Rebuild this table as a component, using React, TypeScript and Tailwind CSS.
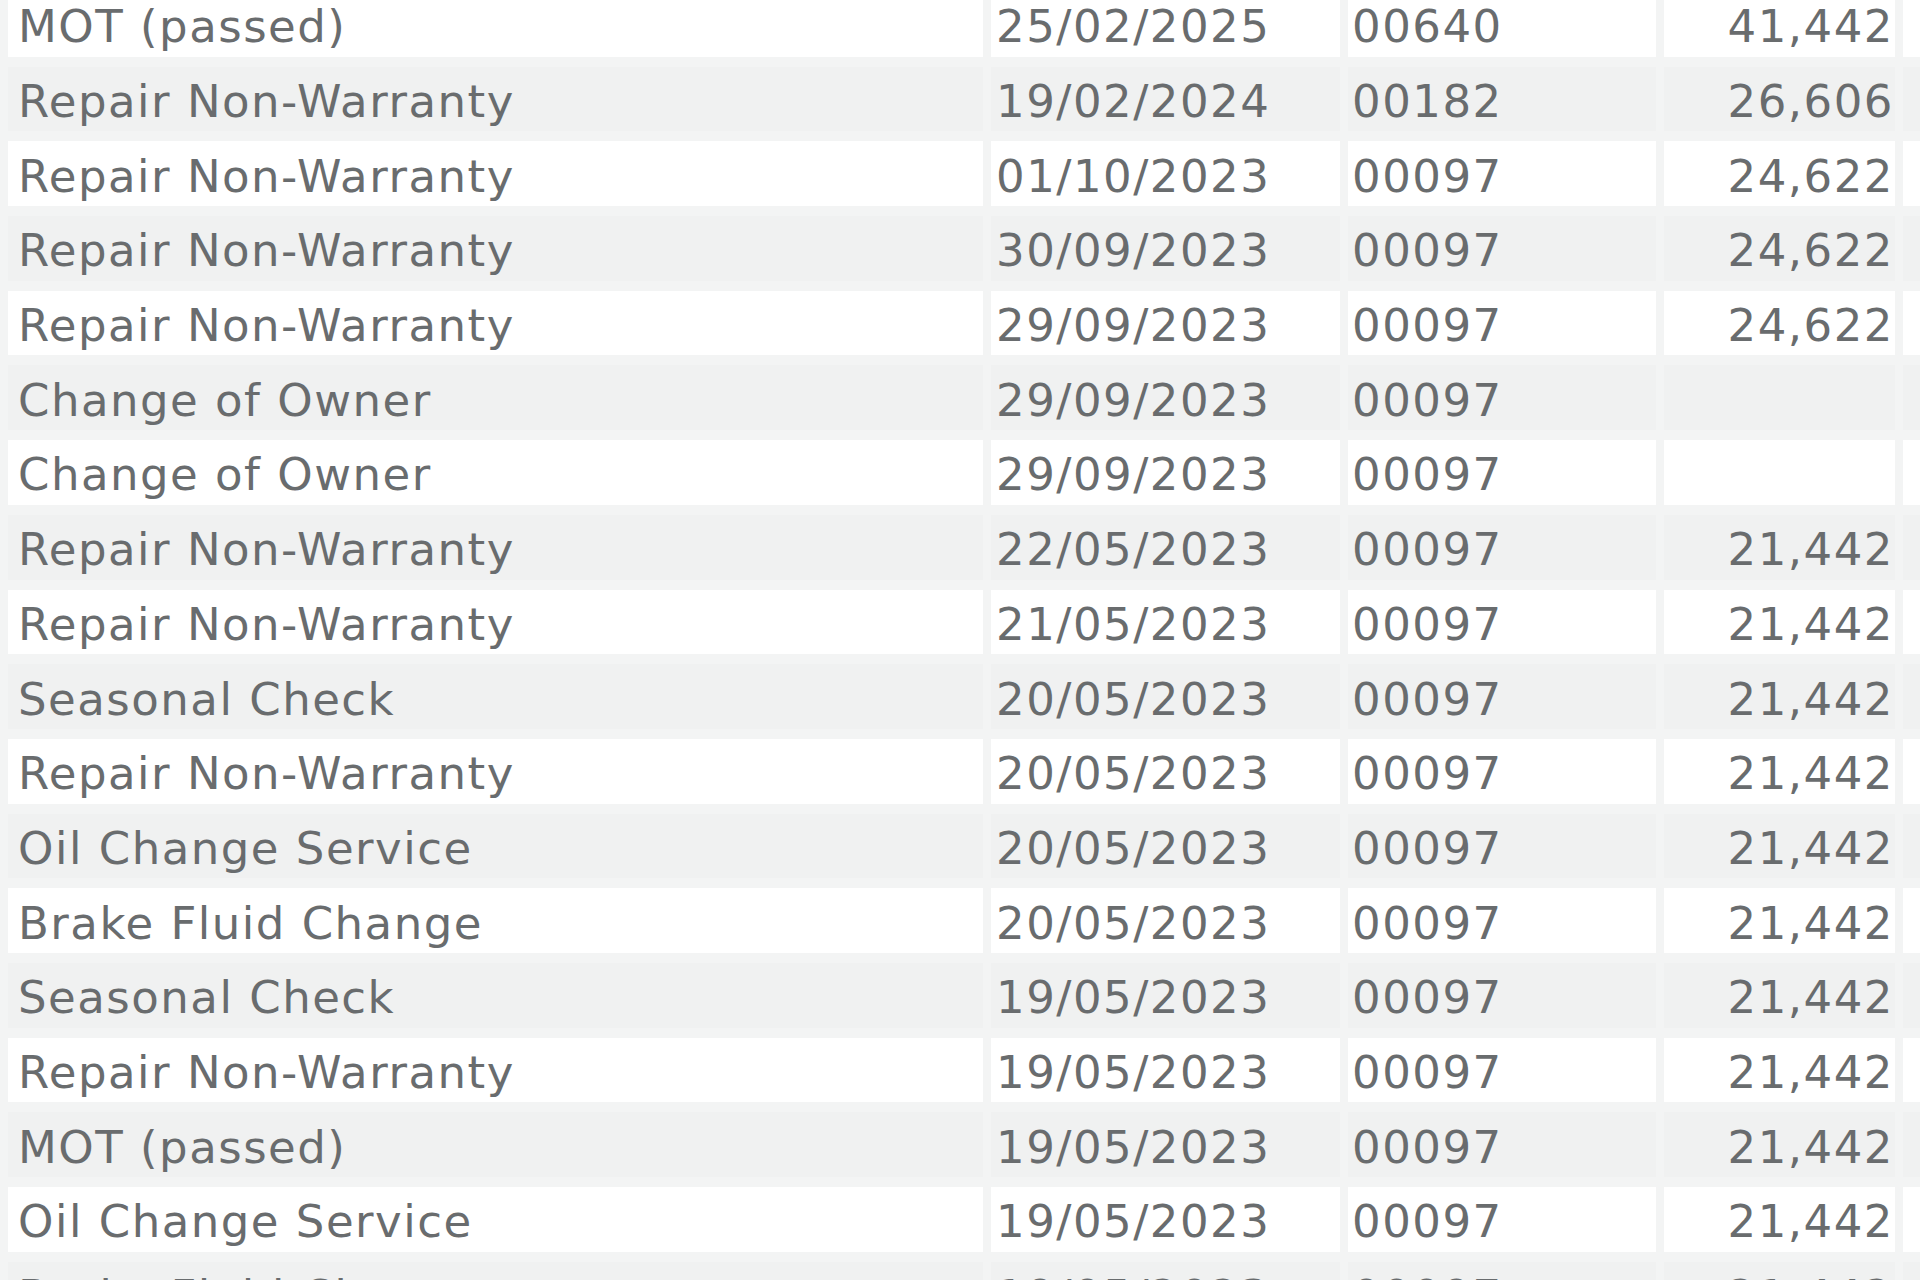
import React from 'react';

type Entry = {
  job: string;
  date: string;
  code: string;
  km: string;
};

const entries: Entry[] = [
  { job: 'MOT (passed)', date: '25/02/2025', code: '00640', km: '41,442' },
  { job: 'Repair Non-Warranty', date: '19/02/2024', code: '00182', km: '26,606' },
  { job: 'Repair Non-Warranty', date: '01/10/2023', code: '00097', km: '24,622' },
  { job: 'Repair Non-Warranty', date: '30/09/2023', code: '00097', km: '24,622' },
  { job: 'Repair Non-Warranty', date: '29/09/2023', code: '00097', km: '24,622' },
  { job: 'Change of Owner', date: '29/09/2023', code: '00097', km: '' },
  { job: 'Change of Owner', date: '29/09/2023', code: '00097', km: '' },
  { job: 'Repair Non-Warranty', date: '22/05/2023', code: '00097', km: '21,442' },
  { job: 'Repair Non-Warranty', date: '21/05/2023', code: '00097', km: '21,442' },
  { job: 'Seasonal Check', date: '20/05/2023', code: '00097', km: '21,442' },
  { job: 'Repair Non-Warranty', date: '20/05/2023', code: '00097', km: '21,442' },
  { job: 'Oil Change Service', date: '20/05/2023', code: '00097', km: '21,442' },
  { job: 'Brake Fluid Change', date: '20/05/2023', code: '00097', km: '21,442' },
  { job: 'Seasonal Check', date: '19/05/2023', code: '00097', km: '21,442' },
  { job: 'Repair Non-Warranty', date: '19/05/2023', code: '00097', km: '21,442' },
  { job: 'MOT (passed)', date: '19/05/2023', code: '00097', km: '21,442' },
  { job: 'Oil Change Service', date: '19/05/2023', code: '00097', km: '21,442' },
  { job: 'Brake Fluid Change', date: '19/05/2023', code: '00097', km: '21,442' },
];

const App = () => {
  return (
    <div className="w-[1920px] h-[1280px] overflow-hidden bg-[#f3f4f4]">
      {/* history table, first row sits a little above the top edge */}
      <div
        className="-mt-[8px] pl-[8px] grid grid-cols-[975px_349px_308px_231px_1fr] gap-x-[8px] gap-y-[10px] text-[45px] leading-none tracking-[1.5px] text-[#696c6e]"
        style={{ fontFamily: '"DejaVu Sans", Verdana, sans-serif' }}
      >
        {entries.map((e, i) => {
          const bg = i % 2 === 0 ? 'bg-white' : 'bg-[#f0f1f1]';
          return (
            <React.Fragment key={i}>
              <div className={`${bg} h-[64.7px] flex items-center pt-[5px] pl-[10px] whitespace-nowrap`}>{e.job}</div>
              <div className={`${bg} h-[64.7px] flex items-center pt-[5px] pl-[5px] whitespace-nowrap`}>{e.date}</div>
              <div className={`${bg} h-[64.7px] flex items-center pt-[5px] pl-[4px]`}>{e.code}</div>
              <div className={`${bg} h-[64.7px] flex items-center justify-end pt-[5px] pr-[1px]`}>{e.km}</div>
              <div className={`${bg} h-[64.7px]`} />
            </React.Fragment>
          );
        })}
      </div>
    </div>
  );
};

export default App;
